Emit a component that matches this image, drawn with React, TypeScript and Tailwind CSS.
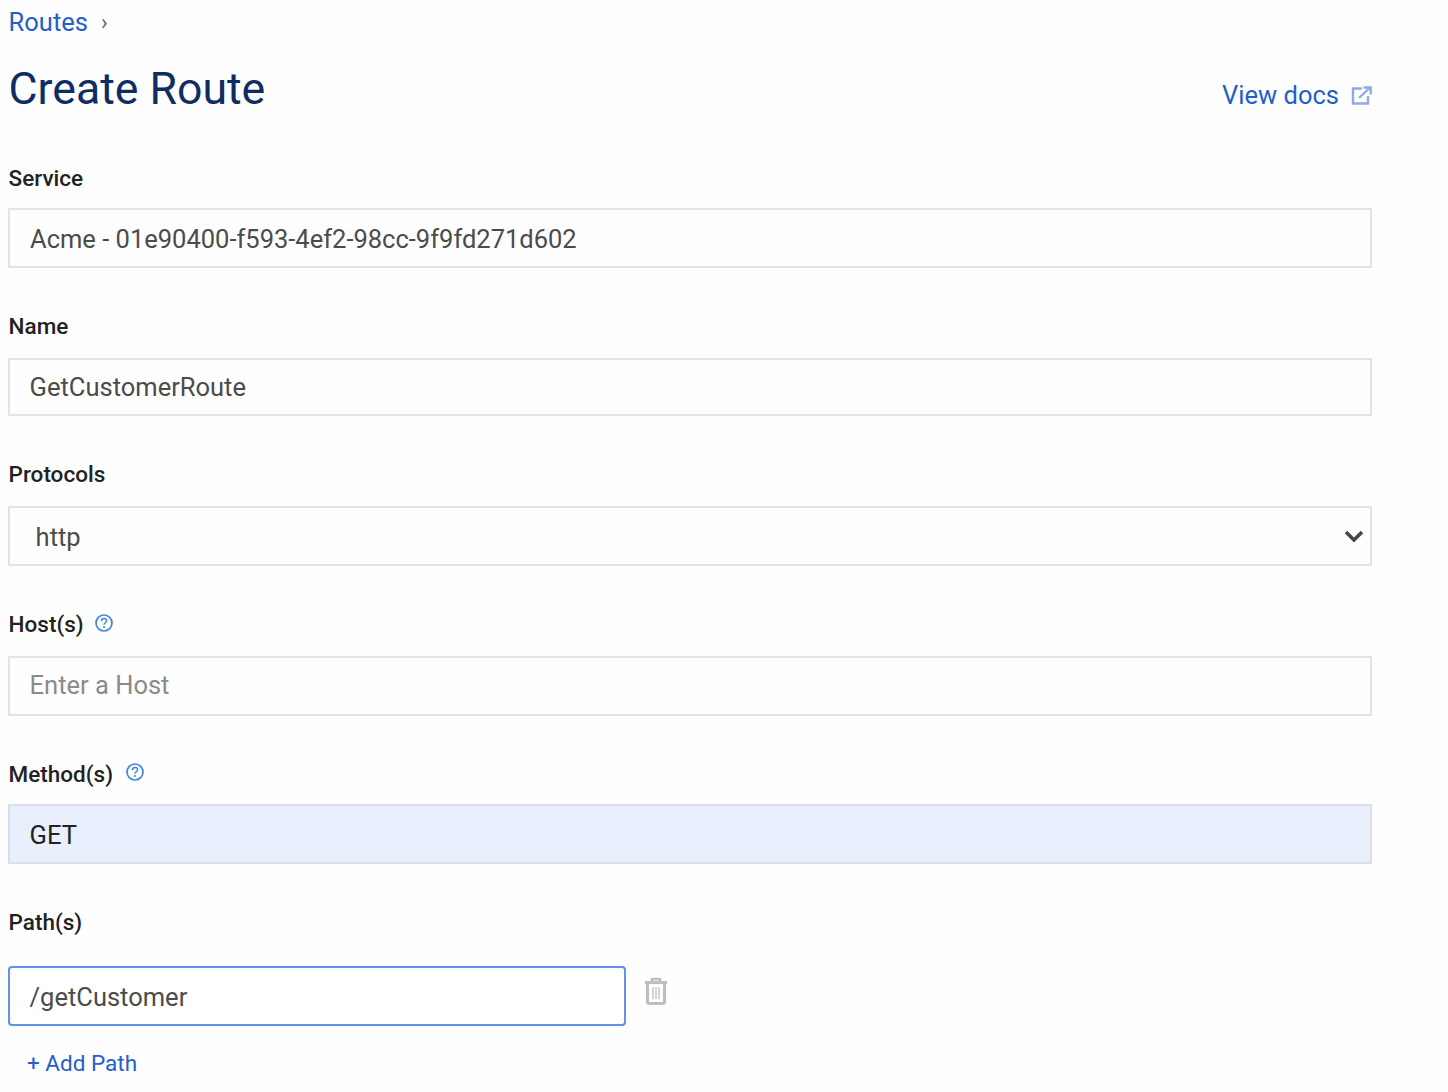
import React from "react";

const font = { fontFamily: "Roboto, 'Liberation Sans', sans-serif" };

function Help({ className }: { className: string }) {
  return (
    <svg width="18" height="18" viewBox="0 0 18 18" fill="none" className={`shrink-0 ${className}`}>
      <circle cx="9" cy="9" r="8" stroke="#3f85d8" strokeWidth="1.7" />
      <path d="M6.4 7.1C6.5 5.5 7.6 4.6 9 4.6c1.5 0 2.6 1 2.6 2.2 0 2-2.6 1.9-2.6 3.9" stroke="#3f85d8" strokeWidth="1.5" fill="none" />
      <circle cx="9" cy="13.1" r="1" fill="#3f85d8" />
    </svg>
  );
}

function Label({ children, help, className }: { children: React.ReactNode; help?: React.ReactNode; className: string }) {
  return (
    <div className={`flex items-center h-[28px] pl-[0.6px] text-[22.5px] font-medium text-[#222222] ${className}`}>
      <span>{children}</span>
      {help}
    </div>
  );
}

function Box({ children, className }: { children: React.ReactNode; className: string }) {
  return (
    <div className={`w-[1364px] border-2 flex items-center text-[25.5px] ${className}`}>
      {children}
    </div>
  );
}

export default function App() {
  return (
    <div style={font} className="h-[1092px] w-[1448px] overflow-hidden bg-[#fefefe] pl-[8px]">
      <div className="flex items-center h-[44px] pl-[0.6px] text-[25.5px] text-[#2260c8]">
        <span>Routes</span>
        <span className="ml-[13px] text-[#5f6368] text-[22px]">›</span>
      </div>
      <div className="flex items-center justify-between w-[1364px] h-[90px] pl-[0.6px]">
        <h1 className="text-[44.6px] leading-none text-[#0d2d63]">Create Route</h1>
        <a className="flex items-center gap-[12px] text-[25.5px] text-[#2260c8] mt-[12px]">
          View docs
          <svg width="21" height="19" viewBox="0 0 21 19" fill="none">
            <path d="M11 2.5H2v15h15V10" stroke="#8eabe6" strokeWidth="2.4" />
            <path d="M8 12 18 2.5M12.5 1.5h7.2v7" stroke="#8eabe6" strokeWidth="2.4" />
          </svg>
        </a>
      </div>

      <Label className="mt-[31px] mb-[15px]">Service</Label>
      <Box className="h-[60px] border-[#e4e2e6] pl-[20px] pt-[3px] text-[#4b4b4b]">Acme - 01e90400-f593-4ef2-98cc-9f9fd271d602</Box>

      <Label className="mt-[45px] mb-[17px]">Name</Label>
      <Box className="h-[58px] border-[#e4e2e6] pl-[19.6px] text-[#4b4b4b]">GetCustomerRoute</Box>

      <Label className="mt-[45px] mb-[17px]">Protocols</Label>
      <Box className="h-[60px] border-[#e4e2e6] pl-[25.6px] pt-[3px] pr-[6px] justify-between text-[#4b4b4b]">
        <span>http</span>
        <svg width="20" height="14" viewBox="0 0 20 14" fill="none" className="-mt-[3px]">
          <path d="M2 3l8 8 8-8" stroke="#47474b" strokeWidth="3.6" />
        </svg>
      </Box>

      <Label help={<Help className="ml-[11px] -mt-[4px]" />} className="mt-[45px] mb-[17px]">Host(s)</Label>
      <Box className="h-[60px] border-[#e4e2e6] pl-[19.6px] pb-[2px] text-[#8a8a8a]">Enter a Host</Box>

      <Label help={<Help className="ml-[13px] -mt-[6px]" />} className="mt-[45px] mb-[15px]">Method(s)</Label>
      <Box className="h-[60px] bg-[#e9effd] border-[#dcdfe8] pl-[19.6px] pt-[3px] text-[#222222]">GET</Box>

      <Label className="mt-[45px] mb-[29px]">Path(s)</Label>
      <div className="flex items-start">
        <div className="h-[60px] w-[618px] border-2 border-[#6590ea] rounded-[4px] bg-white flex items-center pl-[19.6px] pt-[3px] text-[25.5px] text-[#4b4b4b]">
          /getCustomer
        </div>
        <svg width="24" height="28" viewBox="0 0 24 28" fill="none" className="ml-[18px] mt-[11px]">
          <path d="M1 5.5h22" stroke="#bdbdc1" strokeWidth="3" />
          <path d="M8 5V2h8v3" stroke="#bdbdc1" strokeWidth="2.6" />
          <path d="M3.5 7v17.5a2 2 0 0 0 2 2h13a2 2 0 0 0 2-2V7" stroke="#bdbdc1" strokeWidth="3" />
          <path d="M9 10v12M12 10v12M15 10v12" stroke="#bdbdc1" strokeWidth="1.3" />
        </svg>
      </div>
      <div className="mt-[21px] ml-[19px] text-[22.5px] text-[#2260c8]">+ Add Path</div>
    </div>
  );
}
